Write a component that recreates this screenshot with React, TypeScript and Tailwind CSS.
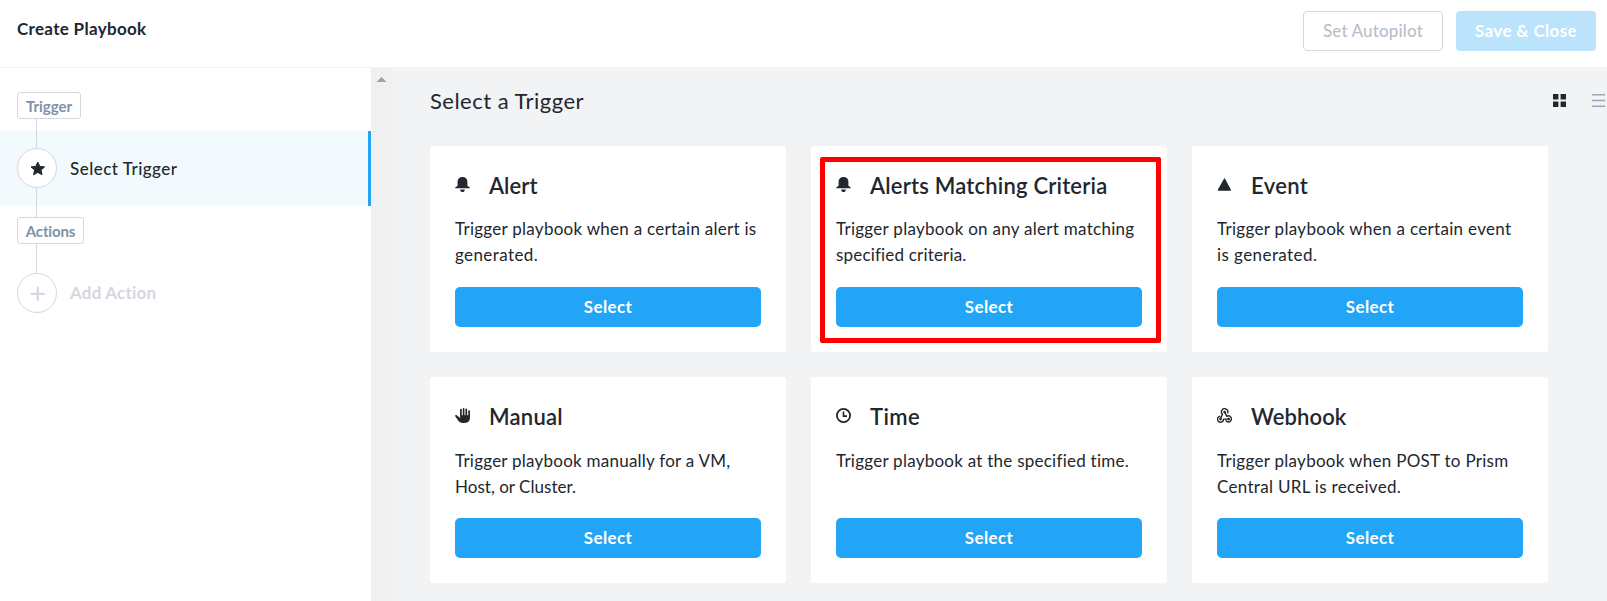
import React from "react";

function BellIcon() {
  return (
    <svg width="15" height="15" viewBox="0 0 15 15" fill="currentColor">
      <path d="M7.5 0C4.6 0 2.6 2 2.6 4.6V8.6C2.6 9.3 1.6 9.6 .3 10.4C0 10.6 0 11.2 .4 11.2H14.6C15 11.2 15 10.6 14.7 10.4C13.4 9.6 12.4 9.3 12.4 8.6V4.6C12.4 2 10.4 0 7.5 0Z" />
      <path d="M5.1 12.4H9.9C9.7 14 8.8 15 7.5 15C6.2 15 5.3 14 5.1 12.4Z" />
    </svg>
  );
}

function TriangleIcon() {
  return (
    <svg width="15" height="15" viewBox="0 0 15 15" fill="currentColor" stroke="currentColor" strokeLinejoin="round">
      <path d="M7.5 2L13.4 13.1H1.4Z" strokeWidth="1.2" />
    </svg>
  );
}

function HandIcon() {
  return (
    <svg width="15" height="15" viewBox="0 0 15 15" fill="none" stroke="currentColor" strokeLinecap="round">
      <path d="M5.9 1.6V8M8.6 .9V8M11.3 1.3V8M14.1 3V8.5" strokeWidth="1.7" />
      <path
        d="M5.1 7.3H14.9V9.8C14.9 13 13 15 9.8 15H8C5.6 15 4.2 14.2 3 12.3L.2 8.2C-.2 7.4 1 6.6 1.8 7.3L5.1 10Z"
        fill="currentColor"
        stroke="none"
      />
    </svg>
  );
}

function ClockIcon() {
  return (
    <svg width="15" height="15" viewBox="0 0 15 15" fill="none" stroke="currentColor">
      <circle cx="7.5" cy="7.5" r="6.6" strokeWidth="1.8" />
      <path d="M7.5 3.6V8.1H11" strokeWidth="1.6" />
    </svg>
  );
}

function WebhookIcon() {
  return (
    <svg width="15" height="15" viewBox="0 0 15 15" fill="none" stroke="currentColor" strokeWidth="1.4" strokeLinecap="round" strokeLinejoin="round">
      <path d="M10.7 4.9A3.2 3.2 0 1 0 5.5 6.3L3.6 10.4" />
      <path d="M7.6 4.2L9.9 8.3A3 3 0 1 1 9 12.7" />
      <path d="M11.6 11.1H6.5A3 3 0 1 1 2.6 8.3" />
      <circle cx="7.6" cy="4" r=".6" />
      <circle cx="3.5" cy="11.1" r=".6" />
      <circle cx="11.7" cy="11.1" r=".6" />
    </svg>
  );
}

type Trigger = {
  title: string;
  titleClass: string;
  bodyClass: string;
  lines: { text: string; className: string }[];
  icon: React.ReactNode;
  highlighted?: boolean;
};

const triggers: Trigger[] = [
  {
    title: "Alert",
    titleClass: "tracking-[0.05px]",
    bodyClass: "pt-[17px]",
    icon: <BellIcon />,
    lines: [
      { text: "Trigger playbook when a certain alert is", className: "tracking-[0.27px]" },
      { text: "generated.", className: "tracking-[0.4px]" },
    ],
  },
  {
    title: "Alerts Matching Criteria",
    titleClass: "tracking-[0.2px]",
    bodyClass: "pt-[17px]",
    icon: <BellIcon />,
    highlighted: true,
    lines: [
      { text: "Trigger playbook on any alert matching", className: "tracking-[0.28px]" },
      { text: "specified criteria.", className: "tracking-[0.18px]" },
    ],
  },
  {
    title: "Event",
    titleClass: "tracking-[0.4px]",
    bodyClass: "pt-[17px]",
    icon: <TriangleIcon />,
    lines: [
      { text: "Trigger playbook when a certain event", className: "tracking-[0.31px]" },
      { text: "is generated.", className: "tracking-[0.42px]" },
    ],
  },
  {
    title: "Manual",
    titleClass: "tracking-[0.25px]",
    bodyClass: "pt-[18px]",
    icon: <HandIcon />,
    lines: [
      { text: "Trigger playbook manually for a VM,", className: "tracking-[0.24px]" },
      { text: "Host, or Cluster.", className: "tracking-[0.03px]" },
    ],
  },
  {
    title: "Time",
    titleClass: "tracking-[0.4px]",
    bodyClass: "pt-[18px]",
    icon: <ClockIcon />,
    lines: [{ text: "Trigger playbook at the specified time.", className: "tracking-[0.25px]" }],
  },
  {
    title: "Webhook",
    titleClass: "tracking-[0.1px]",
    bodyClass: "pt-[18px]",
    icon: <WebhookIcon />,
    lines: [
      { text: "Trigger playbook when POST to Prism", className: "tracking-[0.29px]" },
      { text: "Central URL is received.", className: "tracking-[0.3px]" },
    ],
  },
];

function TriggerCard({ trigger }: { trigger: Trigger }) {
  return (
    <article className="relative flex h-[206px] flex-col rounded-[3px] bg-white p-[25px]">
      <header className="flex h-7 items-center gap-[19px] pt-0.5">
        <span className="-mt-[3px] flex w-[15px]">{trigger.icon}</span>
        <h2 className={"whitespace-nowrap text-[22px] font-semibold leading-7 " + trigger.titleClass}>{trigger.title}</h2>
      </header>
      <p className={"h-[70px] shrink-0 whitespace-nowrap text-[17px] leading-[26px] " + trigger.bodyClass}>
        {trigger.lines.map((line) => (
          <span key={line.text} className={"block " + line.className}>
            {line.text}
          </span>
        ))}
      </p>
      <button className="mt-[18px] h-10 shrink-0 rounded-[5px] bg-[#22a5f7] text-[17px] font-bold tracking-[0.35px] text-white">
        Select
      </button>
      {trigger.highlighted && (
        <div className="pointer-events-none absolute left-[9px] top-[11px] h-[186px] w-[341px] rounded-[2px] border-[5px] border-[#ff0000]" />
      )}
    </article>
  );
}

function Connector({ className }: { className: string }) {
  return <div className={"ml-[36px] w-px bg-[#d3d8e0] " + className} />;
}

export default function App() {
  return (
    <div className="flex h-[601px] w-full flex-col overflow-hidden bg-white font-['Lato',sans-serif] text-[#22272e]">
      <header className="flex h-[67px] shrink-0 items-start justify-between pl-[17px] pr-[11px]">
        <h1 className="mt-[17px] text-[17px] font-bold leading-6 tracking-[0.32px]">Create Playbook</h1>
        <div className="mt-[11px] flex gap-[13px]">
          <button className="h-10 w-[140px] rounded-[4px] border border-[#d3d8e0] text-[17px] font-medium tracking-[0.15px] text-[#b8bfca]">
            Set Autopilot
          </button>
          <button className="h-10 w-[140px] rounded-[4px] bg-[#bce3fc] text-[17px] font-bold tracking-[0.35px] text-white">
            Save &amp; Close
          </button>
        </div>
      </header>
      <div className="flex min-h-0 flex-1">
        <aside className="w-[371px] shrink-0 border-t border-[#f2f3f5] pt-6">
          <div className="ml-[17px] flex h-[27px] w-16 items-center justify-center rounded-[3px] border border-[#d3d8e0] bg-white text-[15px] font-bold leading-5 text-[#8091a7]">
            Trigger
          </div>
          <Connector className="h-3" />
          <div className="flex h-[75px] border-r-[3px] border-[#22a5f7] bg-[#f2fafe]">
            <div className="flex w-[57px] flex-col">
              <Connector className="h-[17px]" />
              <div className="ml-[17px] flex size-10 shrink-0 items-center justify-center rounded-full border border-[#d3d8e0] bg-white">
                <svg width="17" height="17" viewBox="0 0 17 17" fill="currentColor" stroke="currentColor" strokeLinejoin="round">
                  <path d="M8.8 2L10.8 6.4L15.6 6.9L12 10.1L13 14.8L8.8 12.4L4.6 14.8L5.6 10.1L2 6.9L6.8 6.4Z" strokeWidth="1" />
                </svg>
              </div>
              <Connector className="flex-1" />
            </div>
            <span className="ml-[13px] mt-[26px] text-[17px] font-medium leading-6 tracking-[0.48px]">Select Trigger</span>
          </div>
          <Connector className="h-[11px]" />
          <div className="ml-[17px] flex h-[27px] w-[67px] items-center justify-center rounded-[3px] border border-[#d3d8e0] bg-white text-[15px] font-bold leading-5 tracking-[-0.15px] text-[#8091a7]">
            Actions
          </div>
          <Connector className="h-[29px]" />
          <div className="flex">
            <div className="ml-[17px] flex size-10 shrink-0 items-center justify-center rounded-full border border-[#d3d8e0] bg-white">
              <svg width="17" height="17" viewBox="0 0 17 17" fill="none" stroke="#d3d8e0" strokeWidth="2.2" strokeLinecap="round">
                <path d="M8.8 2.6V15M2.6 8.8H15" />
              </svg>
            </div>
            <span className="ml-[13px] mt-2 text-[17px] font-bold leading-6 tracking-[0.2px] text-[#d3d8e0]">Add Action</span>
          </div>
        </aside>
        <div className="flex w-[21px] shrink-0 flex-col border-t border-[#f2f3f5] bg-[#f0f0f0] pl-[6px] pt-[9px]">
          <svg width="9" height="5" viewBox="0 0 9 5" fill="#a3a3a3" shapeRendering="crispEdges">
            <path d="M4 0H5V1H6V2H7V3H8V4H9V5H0V4H1V3H2V2H3V1H4Z" />
          </svg>
        </div>
        <main className="min-w-0 flex-1 bg-[#f2f3f5] pl-[38px]">
          <div className="flex h-[79px] items-start justify-between pr-0.5">
            <h2 className="mt-5 text-[22px] leading-7 tracking-[0.48px]">Select a Trigger</h2>
            <div className="mt-[27px] flex gap-[26px]">
              <svg width="13" height="13" viewBox="0 0 13 13" fill="#22272e">
                <path d="M0 0H5.4V5.4H0ZM7.6 0H13V5.4H7.6ZM0 7.6H5.4V13H0ZM7.6 7.6H13V13H7.6Z" />
              </svg>
              <svg width="13" height="13" viewBox="0 0 13 13" stroke="#9aa8ba" strokeWidth="1.6">
                <path d="M0 .8H13M0 6.5H13M0 12.2H13" />
              </svg>
            </div>
          </div>
          <div className="grid grid-cols-[356px_356px_356px] gap-[25px]">
            {triggers.map((trigger) => (
              <TriggerCard key={trigger.title} trigger={trigger} />
            ))}
          </div>
        </main>
      </div>
    </div>
  );
}
